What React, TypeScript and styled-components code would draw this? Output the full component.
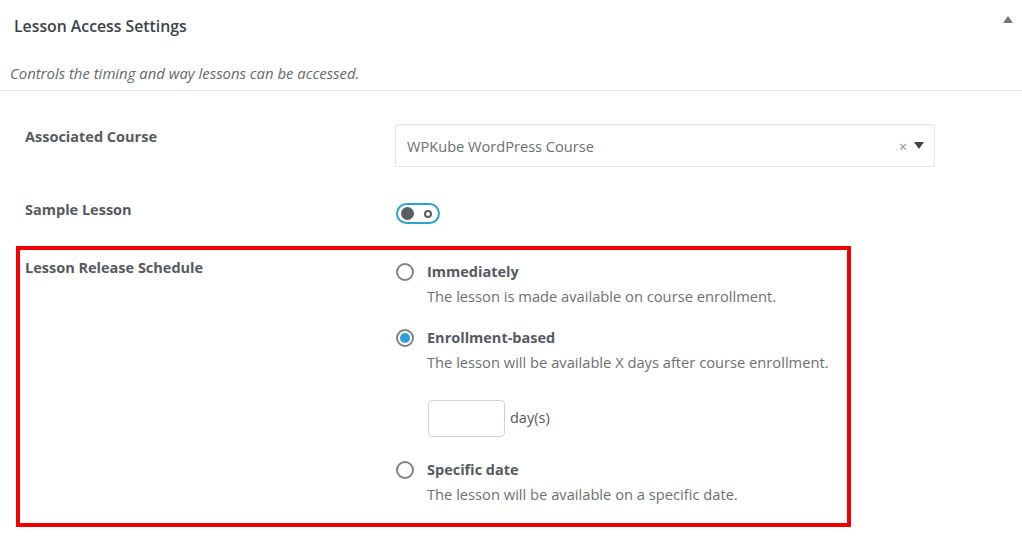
import React from "react";
import styled, { createGlobalStyle } from "styled-components";

const GlobalStyle = createGlobalStyle`
  html, body {
    margin: 0;
    padding: 0;
    background: #ffffff;
  }
  body {
    font-family: "Open Sans", "Noto Sans", "Liberation Sans", sans-serif;
    color: #50575e;
  }
  * { box-sizing: border-box; }
`;

const Panel = styled.div`
  width: 1022px;
  min-height: 552px;
  background: #fff;
`;

const Header = styled.div`
  height: 52px;
  display: flex;
  align-items: center;
  justify-content: space-between;
  padding: 0 9px 0 14px;
`;

const Title = styled.h2`
  margin: 0;
  font-size: 15.8px;
  font-weight: 600;
  color: #3c434a;
`;

const ToggleArrow = styled.span`
  width: 0;
  height: 0;
  border-left: 5px solid transparent;
  border-right: 5px solid transparent;
  border-bottom: 7px solid #72777c;
  margin-top: -13px;
`;

const Description = styled.p`
  margin: 0;
  padding: 11px 10px 6px;
  font-size: 14.9px;
  font-style: italic;
  line-height: 21px;
  color: #646970;
  border-bottom: 1px solid #e2e4e7;
`;

const Body = styled.div`
  padding-top: 33px;
  display: flex;
  flex-direction: column;
  gap: 32px;
`;

const Row = styled.div`
  display: grid;
  grid-template-columns: 370px 540px;
  padding-left: 25px;
  align-items: start;
`;

const Highlight = styled.div`
  margin: -10px 0 0 16px;
  width: 835px;
  border: 4px solid #f00000;
  padding: 8px 0 18px 5px;
  display: grid;
  grid-template-columns: 370px 1fr;
  align-items: start;
`;

const Label = styled.div<{ $top?: number }>`
  font-size: 14.5px;
  font-weight: 700;
  line-height: 20px;
  color: #555a60;
  padding-top: ${(p) => p.$top ?? 0}px;
`;

const Select = styled.div`
  height: 43px;
  width: 540px;
  border: 1px solid #e4e5e7;
  border-radius: 2px;
  box-shadow: inset 0 1px 2px rgba(0, 0, 0, 0.04);
  display: flex;
  align-items: center;
  padding: 0 10px 0 11px;
  font-size: 14.6px;
  color: #6d6f73;
`;

const SelectText = styled.span`
  flex: 1;
`;

const ClearX = styled.span`
  font-size: 14px;
  color: #8a8a8a;
  margin-right: 7px;
  margin-top: 1px;
`;

const Caret = styled.span`
  width: 0;
  height: 0;
  border-left: 5px solid transparent;
  border-right: 5px solid transparent;
  border-top: 7px solid #444;
`;

const Toggle = styled.div`
  margin-top: 4px;
  margin-left: 1px;
  width: 44px;
  height: 21px;
  border: 2px solid #2ea2cc;
  border-radius: 11px;
  display: flex;
  align-items: center;
  justify-content: space-between;
  padding: 0 6px 0 3px;
`;

const Knob = styled.span`
  width: 13px;
  height: 13px;
  border-radius: 50%;
  background: #5a5e64;
`;

const Ring = styled.span`
  width: 8px;
  height: 8px;
  border-radius: 50%;
  border: 2px solid #5a5e64;
`;

const Options = styled.div`
  display: flex;
  flex-direction: column;
  padding-top: 3px;
`;

const Option = styled.div<{ $gap?: number }>`
  display: grid;
  grid-template-columns: 32px 1fr;
  margin-bottom: ${(p) => p.$gap ?? 0}px;
`;

const Radio = styled.span<{ $checked?: boolean }>`
  margin-top: 2px;
  margin-left: 1px;
  width: 18px;
  height: 18px;
  border-radius: 50%;
  border: 2px solid #7e8287;
  display: flex;
  align-items: center;
  justify-content: center;
  &::after {
    content: "";
    width: 10px;
    height: 10px;
    border-radius: 50%;
    background: ${(p) => (p.$checked ? "#2d9fd9" : "transparent")};
  }
`;

const OptionText = styled.div`
  display: flex;
  flex-direction: column;
`;

const OptionTitle = styled.div`
  font-size: 14.5px;
  font-weight: 700;
  line-height: 22px;
  color: #555a60;
`;

const OptionDesc = styled.div`
  margin-top: 2px;
  font-size: 14.7px;
  line-height: 22px;
  color: #6d7075;
`;

const DaysRow = styled.div`
  margin: 27px 0 22px 33px;
  display: flex;
  align-items: center;
  gap: 5px;
  font-size: 14.5px;
  color: #555a60;
`;

const DaysInput = styled.div`
  width: 77px;
  height: 37px;
  border: 1px solid #cfd1d4;
  border-radius: 4px;
  background: #fff;
`;

const DaysLabel = styled.span`
  margin-top: -3px;
`;

export default function App() {
  return (
    <>
      <GlobalStyle />
      <Panel>
        <Header>
          <Title>Lesson Access Settings</Title>
          <ToggleArrow />
        </Header>
        <Description>Controls the timing and way lessons can be accessed.</Description>
        <Body>
          <Row>
            <Label $top={3}>Associated Course</Label>
            <Select>
              <SelectText>WPKube WordPress Course</SelectText>
              <ClearX>×</ClearX>
              <Caret />
            </Select>
          </Row>
          <Row>
            <Label $top={1}>Sample Lesson</Label>
            <Toggle>
              <Knob />
              <Ring />
            </Toggle>
          </Row>
          <Highlight>
            <Label>Lesson Release Schedule</Label>
            <Options>
              <Option $gap={20}>
                <Radio />
                <OptionText>
                  <OptionTitle>Immediately</OptionTitle>
                  <OptionDesc>The lesson is made available on course enrollment.</OptionDesc>
                </OptionText>
              </Option>
              <Option>
                <Radio $checked />
                <OptionText>
                  <OptionTitle>Enrollment-based</OptionTitle>
                  <OptionDesc>The lesson will be available X days after course enrollment.</OptionDesc>
                </OptionText>
              </Option>
              <DaysRow>
                <DaysInput />
                <DaysLabel>day(s)</DaysLabel>
              </DaysRow>
              <Option>
                <Radio />
                <OptionText>
                  <OptionTitle>Specific date</OptionTitle>
                  <OptionDesc>The lesson will be available on a specific date.</OptionDesc>
                </OptionText>
              </Option>
            </Options>
          </Highlight>
        </Body>
      </Panel>
    </>
  );
}
